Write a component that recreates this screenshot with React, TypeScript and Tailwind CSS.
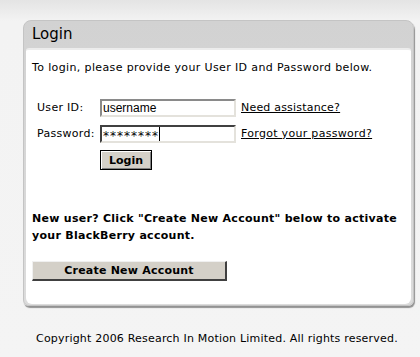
import React from 'react'

const FONT = { fontFamily: '"DejaVu Sans", Verdana, sans-serif' }

export default function App() {
  return (
    <div
      className="h-[357px] w-[420px] bg-gradient-to-b from-[#e4e4e4] via-[#f3f3f3] via-[6%] to-[#f4f4f4] pt-[20px] text-[11px] tracking-[0.3px] text-black"
      style={FONT}
    >
      {/* Login panel */}
      <div className="ml-[23px] w-[391px] rounded-t-[8px] rounded-b-[6px] border border-[#c4c4c4] bg-gradient-to-b from-[#d2d2d2] to-[#dcdcdc] px-[2px] pb-[1px] shadow-[1px_2px_1px_rgba(0,0,0,0.4)]">
        <div className="flex h-[27px] items-center pl-[6px] text-[15px] leading-none tracking-normal">Login</div>
        <div className="rounded-t-[3px] rounded-b-[6px] border-t-2 border-[#ececec] bg-white px-[6px] pb-[23px] pt-[11px]">
          <p className="leading-[14px] tracking-[0.37px]">To login, please provide your User ID and Password below.</p>

          {/* fields */}
          <div className="mt-[24px] flex h-[18px] items-center">
            <span className="ml-[5px] w-[63px]">User ID:</span>
            <div
              className="flex h-[18px] w-[136px] items-center border-2 border-t-[#8a8a8a] border-l-[#8a8a8a] border-b-[#e4e2dc] border-r-[#e4e2dc] bg-white pl-[1px] text-[12px] leading-none tracking-normal"
              style={{ fontFamily: '"Liberation Sans", Arial, sans-serif' }}
            >
              username
            </div>
            <a className="ml-[5px] underline tracking-[0.2px]" href="#">Need assistance?</a>
          </div>
          <div className="mt-[8px] flex h-[18px] items-center">
            <span className="ml-[5px] w-[63px]">Password:</span>
            <div className="flex h-[18px] w-[136px] items-center border-2 border-t-[#404040] border-l-[#404040] border-b-[#e4e2dc] border-r-[#e4e2dc] bg-white pl-[1px] text-[12px] leading-none">
              <span className="tracking-[1px] pt-[3px]">********</span>
              <span className="h-[14px] w-px bg-black" />
            </div>
            <a className="ml-[5px] underline" href="#">Forgot your password?</a>
          </div>
          <div className="mt-[7px] pl-[68px]">
            <button className="h-[20px] w-[52px] border border-black bg-[#d4d0c8] font-bold leading-none tracking-normal shadow-[inset_1px_1px_0_#ffffff,inset_-1px_-1px_0_#808080]">
              Login
            </button>
          </div>

          <p className="mt-[40px] font-bold leading-[17px] tracking-[0.28px]">
            New user? Click "Create New Account" below to activate your BlackBerry account.
          </p>

          <button className="mt-[17px] h-[20px] w-[195px] border-b-2 border-r-2 border-t border-l border-b-[#404040] border-r-[#404040] border-t-[#f0f0f0] border-l-[#f0f0f0] bg-[#d4d0c8] font-bold leading-none tracking-[0.22px]">
            Create New Account
          </button>
        </div>
      </div>

      <p className="mt-[26px] pl-[36px] leading-[14px] tracking-[0.2px]">
        Copyright 2006 Research In Motion Limited. All rights reserved.
      </p>
    </div>
  )
}
